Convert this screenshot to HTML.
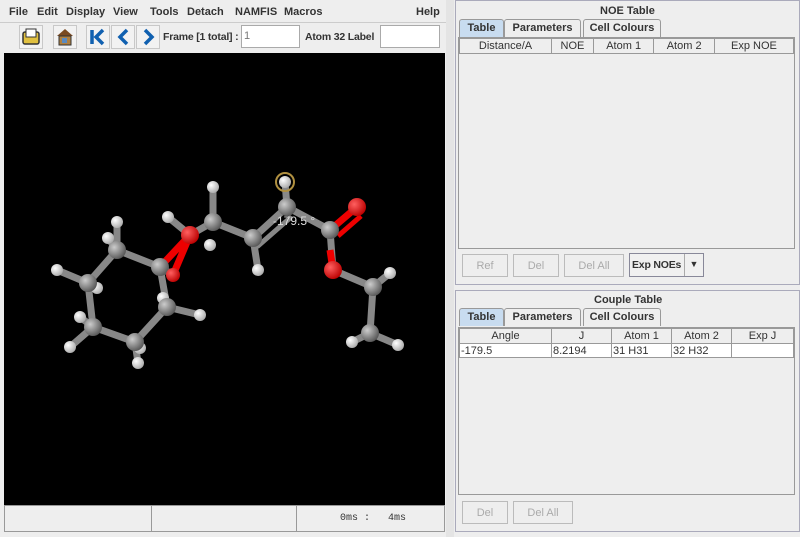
<!DOCTYPE html><html><head><style>
*{margin:0;padding:0;box-sizing:border-box}
body{width:800px;height:537px;background:#eeeeee;font-family:"Liberation Sans",sans-serif;font-size:11px;color:#333;position:relative;overflow:hidden}
.a{position:absolute}
.b{font-weight:bold;color:#333}
.menu span{position:absolute;top:6px;font-weight:bold;font-size:11px}
.tab{position:absolute;height:18px;border:1px solid #999;border-bottom:none;font-weight:bold;text-align:center;line-height:17px;background:#eee;border-radius:3px 3px 0 0}
.tab.sel{background:#c8dcf0}
table{border-collapse:collapse;font-size:11px}
th{font-weight:normal;border:1px solid #999;background:#eee;height:15px;color:#333}
td{border:1px solid #999;height:14px;background:#fff;padding-left:1px}
.btn{position:absolute;height:23px;border:1px solid #bbb;color:#aaa;text-align:center;line-height:22px;background:#eee}
.tb{position:absolute;top:25px;width:24px;height:24px;border:1px solid #c8c8c8;background:#f2f2f2}
</style></head><body>
<div class="menu">
<span style="left:9px">File</span><span style="left:37px">Edit</span><span style="left:66px">Display</span><span style="left:113px">View</span><span style="left:150px">Tools</span><span style="left:187px">Detach</span><span style="left:235px">NAMFIS</span><span style="left:284px">Macros</span><span style="left:416px">Help</span>
</div>
<div class="a" style="left:0;top:22px;width:446px;height:1px;background:#ccc"></div>
<div class="tb" style="left:19px"><svg width="22" height="22"><rect x="3" y="6" width="16" height="12" rx="2" fill="#e0c040" stroke="#333" stroke-width="1.5"/><rect x="6" y="3" width="10" height="8" fill="#fff" stroke="#333"/></svg></div>
<div class="tb" style="left:53px"><svg width="22" height="22"><path d="M3 10 L11 3 L19 10 Z" fill="#7a4a20"/><rect x="5" y="10" width="12" height="9" fill="#b08040" stroke="#333"/><rect x="8" y="12" width="5" height="5" fill="#5a8ac0"/></svg></div>
<div class="tb" style="left:86px"><svg width="22" height="22"><path d="M5 4v14M16 4l-7 7 7 7" stroke="#1060b0" stroke-width="3.5" fill="none"/></svg></div>
<div class="tb" style="left:111px"><svg width="22" height="22"><path d="M15 4l-7 7 7 7" stroke="#1060b0" stroke-width="3.5" fill="none"/></svg></div>
<div class="tb" style="left:136px"><svg width="22" height="22"><path d="M8 4l7 7-7 7" stroke="#1060b0" stroke-width="3.5" fill="none"/></svg></div>
<div class="a b" style="left:163px;top:31px;font-size:10.5px;letter-spacing:-.2px">Frame [1 total] :</div>
<div class="a" style="left:241px;top:25px;width:59px;height:23px;background:#fff;border:1px solid #aaa;padding:4px 2px;color:#777">1</div>
<div class="a b" style="left:305px;top:31px;font-size:10.5px;letter-spacing:-.2px">Atom 32 Label</div>
<div class="a" style="left:380px;top:25px;width:60px;height:23px;background:#fff;border:1px solid #aaa"></div>
<div class="a" style="left:4px;top:53px;width:441px;height:452px;background:#000">
<svg width="441" height="452" viewBox="4 53 441 452">
<defs>
<radialGradient id="g" cx=".35" cy=".35" r=".7"><stop offset="0" stop-color="#ccc"/><stop offset="1" stop-color="#555"/></radialGradient>
<radialGradient id="r" cx=".35" cy=".35" r=".7"><stop offset="0" stop-color="#ff6060"/><stop offset="1" stop-color="#b00"/></radialGradient>
<radialGradient id="w" cx=".35" cy=".35" r=".7"><stop offset="0" stop-color="#fff"/><stop offset="1" stop-color="#aaa"/></radialGradient>
</defs>
<g stroke="#888" stroke-width="7" stroke-linecap="round">
<path d="M117 250L88 283L93 327L135 342L167 307L160 267L117 250"/>
<path d="M160 267L173 275M190 235L213 222L253 238L287 207L330 230M330 230L333 270L373 287L370 333"/>
<path d="M117 250L117 222M117 250L108 238M88 283L57 270M88 283L97 288M93 327L80 317M93 327L70 347M135 342L140 348M135 342L138 363M167 307L163 298M167 307L200 315M213 222L213 187M253 238L258 270M287 207L285 182M373 287L390 273M370 333L352 342M370 333L398 345M190 235L168 217"/>
<path d="M258 246L290 218" stroke-width="5"/>
</g>
<g stroke="#e00" stroke-width="7"><path d="M160 267L190 235M173 275L190 235M330 230L357 207M333 270L330 250"/><path d="M338 236L361 216" stroke-width="5"/></g>
<g fill="url(#w)">
<circle cx="117" cy="222" r="6"/><circle cx="108" cy="238" r="6"/><circle cx="57" cy="270" r="6"/><circle cx="97" cy="288" r="6"/><circle cx="80" cy="317" r="6"/><circle cx="70" cy="347" r="6"/><circle cx="140" cy="348" r="6"/><circle cx="138" cy="363" r="6"/><circle cx="163" cy="298" r="6"/><circle cx="200" cy="315" r="6"/><circle cx="213" cy="187" r="6"/><circle cx="258" cy="270" r="6"/><circle cx="285" cy="182" r="6"/><circle cx="390" cy="273" r="6"/><circle cx="352" cy="342" r="6"/><circle cx="398" cy="345" r="6"/><circle cx="168" cy="217" r="6"/><circle cx="210" cy="245" r="6"/>
</g>
<circle cx="285" cy="182" r="9" fill="none" stroke="#b09040" stroke-width="2"/>
<g fill="url(#g)">
<circle cx="117" cy="250" r="9"/><circle cx="88" cy="283" r="9"/><circle cx="93" cy="327" r="9"/><circle cx="135" cy="342" r="9"/><circle cx="167" cy="307" r="9"/><circle cx="160" cy="267" r="9"/><circle cx="213" cy="222" r="9"/><circle cx="253" cy="238" r="9"/><circle cx="287" cy="207" r="9"/><circle cx="330" cy="230" r="9"/><circle cx="373" cy="287" r="9"/><circle cx="370" cy="333" r="9"/>
</g>
<g fill="url(#r)"><circle cx="190" cy="235" r="9"/><circle cx="173" cy="275" r="7"/><circle cx="357" cy="207" r="9"/><circle cx="333" cy="270" r="9"/></g>
<text x="273" y="225" fill="#ddd" font-size="12" font-family="Liberation Sans">-179.5 °</text>
</svg></div>
<div class="a" style="left:4px;top:505px;width:441px;height:27px;border:1px solid #999;background:#eee"></div>
<div class="a" style="left:151px;top:506px;width:1px;height:25px;background:#999"></div>
<div class="a" style="left:296px;top:506px;width:1px;height:25px;background:#999"></div>
<div class="a" style="left:340px;top:513px;font-family:'Liberation Mono',monospace;font-size:10px">0ms :&nbsp;&nbsp;&nbsp;4ms</div>
<div class="a" style="left:446px;top:0;width:8px;height:537px;background:#e4e4e4"></div>
<!-- NOE -->
<div class="a" style="left:455px;top:0;width:345px;height:285px;border:1px solid #aab;background:#eee"></div>
<div class="a b" style="left:600px;top:5px">NOE Table</div>
<div class="tab sel" style="left:459px;top:19px;width:45px">Table</div>
<div class="tab" style="left:504px;top:19px;width:77px">Parameters</div>
<div class="tab" style="left:583px;top:19px;width:78px">Cell Colours</div>
<div class="a" style="left:458px;top:37px;width:337px;height:212px;border:1px solid #999;background:#eee">
<table style="width:335px"><tr><th style="width:92px">Distance/A</th><th>NOE</th><th>Atom 1</th><th>Atom 2</th><th>Exp NOE</th></tr></table></div>
<div class="btn" style="left:462px;top:254px;width:46px">Ref</div>
<div class="btn" style="left:513px;top:254px;width:46px">Del</div>
<div class="btn" style="left:564px;top:254px;width:60px">Del All</div>
<div class="a b" style="left:629px;top:253px;width:75px;height:24px;border:1px solid #889;background:#f0f0f0;padding:5px 2px;font-size:10.5px;letter-spacing:-.2px">Exp NOEs</div>
<div class="a" style="left:684px;top:254px;width:19px;height:22px;border-left:1px solid #aaa;text-align:center;line-height:21px;font-size:9px;background:#f0f0f0">▼</div>
<!-- Couple -->
<div class="a" style="left:455px;top:290px;width:345px;height:242px;border:1px solid #aab;background:#eee"></div>
<div class="a b" style="left:594px;top:294px">Couple Table</div>
<div class="tab sel" style="left:459px;top:308px;width:45px">Table</div>
<div class="tab" style="left:504px;top:308px;width:77px">Parameters</div>
<div class="tab" style="left:583px;top:308px;width:78px">Cell Colours</div>
<div class="a" style="left:458px;top:327px;width:337px;height:168px;border:1px solid #999;background:#eee">
<table style="width:335px"><tr><th style="width:92px">Angle</th><th style="width:60px">J</th><th style="width:60px">Atom 1</th><th style="width:60px">Atom 2</th><th>Exp J</th></tr>
<tr><td>-179.5</td><td>8.2194</td><td>31 H31</td><td>32 H32</td><td></td></tr></table></div>
<div class="btn" style="left:462px;top:501px;width:46px">Del</div>
<div class="btn" style="left:513px;top:501px;width:60px">Del All</div>
</body></html>
